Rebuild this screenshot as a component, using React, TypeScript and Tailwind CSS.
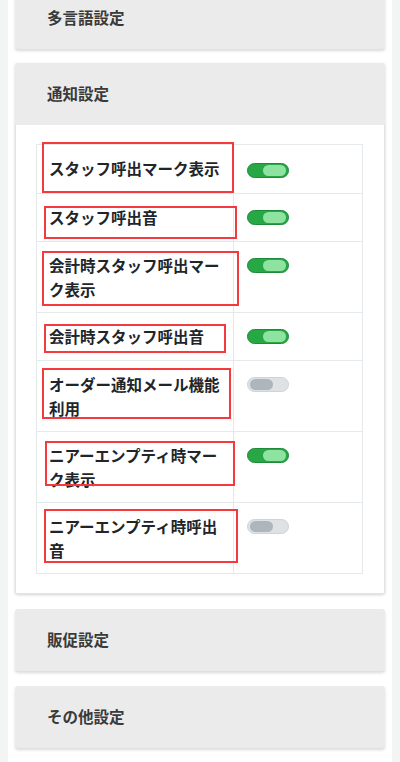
const font = { fontFamily: '"Noto Sans CJK JP", "Noto Sans", sans-serif' };

type Row = {
  label: string;
  on: boolean;
  h: string;
  box: string;
  knobTop?: string;
};

const rows: Row[] = [
  { label: "スタッフ呼出マーク表示", on: true, h: "h-[48px]", box: "left-[5px] -top-[3px] w-[192px] h-[51px]", knobTop: "pt-[18px]" },
  { label: "スタッフ呼出音", on: true, h: "h-[48px]", box: "left-[7px] top-[12px] w-[193px] h-[33px]" },
  { label: "会計時スタッフ呼出マーク表示", on: true, h: "h-[71px]", box: "left-[5px] top-[9px] w-[197px] h-[55px]" },
  { label: "会計時スタッフ呼出音", on: true, h: "h-[48px]", box: "left-[7px] top-[11px] w-[182px] h-[29px]" },
  { label: "オーダー通知メール機能利用", on: false, h: "h-[71px]", box: "left-[5px] top-[7px] w-[189px] h-[51px]" },
  { label: "ニアーエンプティ時マーク表示", on: true, h: "h-[71px]", box: "left-[8px] top-[9px] w-[190px] h-[45px]" },
  { label: "ニアーエンプティ時呼出音", on: false, h: "h-[71px]", box: "left-[7px] top-[6px] w-[194px] h-[54px]" },
];

const Toggle = ({ on }: { on: boolean }) =>
  on ? (
    <div className="w-[42px] h-[15px] rounded-full bg-[#28a745] border border-[#1f8a3a] flex items-center justify-end pr-[2px]">
      <div className="w-[23px] h-[11px] rounded-full bg-[#8ee3a1]" />
    </div>
  ) : (
    <div className="w-[42px] h-[15px] rounded-full bg-[#dfe2e5] border border-[#cfd3d7] flex items-center justify-start pl-[2px]">
      <div className="w-[23px] h-[11px] rounded-full bg-[#adb5bd]" />
    </div>
  );

const CardHeader = ({ title, className = "" }: { title: string; className?: string }) => (
  <div
    className={`h-[62px] bg-[#ebebeb] rounded-[3px] shadow-[0_2px_3px_rgba(0,0,0,0.15)] flex items-center pl-[32px] ${className}`}
  >
    <span className="text-[15.5px] font-bold text-[#3a3a3a]">{title}</span>
  </div>
);

export default function App() {
  return (
    <div className="w-[400px] h-[762px] bg-[#f3f4f4] overflow-hidden" style={font}>
      <div className="ml-2 w-[384px] h-full bg-white px-[7px] flex flex-col gap-[15px]">
        <CardHeader title="多言語設定" className="-mt-[13px] mb-[-1px]" />

        <div className="rounded-[3px] shadow-[0_1px_3px_rgba(0,0,0,0.18)]">
          <CardHeader title="通知設定" className="shadow-none rounded-b-none" />
          <div className="bg-white border border-[#e3e3e3] border-t-0 pt-[19px] pb-[19px] pl-[20px] pr-[21px]">
            <div className="border border-[#e6e9ec]">
              {rows.map((r, i) => (
                <div key={i} className={`flex ${r.h} ${i > 0 ? "border-t border-[#e6e9ec]" : ""}`}>
                  <div className="relative w-[197px] shrink-0 border-r border-[#e6e9ec] px-[12px] pt-[12px]">
                    <p className="text-[15.5px] leading-[23.5px] font-bold text-[#212529]">{r.label}</p>
                    <div className={`absolute ${r.box} border-2 border-[#f4393f]`} />
                  </div>
                  <div className={`flex-1 pl-[13px] ${r.knobTop ?? "pt-[16px]"}`}>
                    <Toggle on={r.on} />
                  </div>
                </div>
              ))}
            </div>
          </div>
        </div>

        <CardHeader title="販促設定" />
        <CardHeader title="その他設定" />
      </div>
    </div>
  );
}
